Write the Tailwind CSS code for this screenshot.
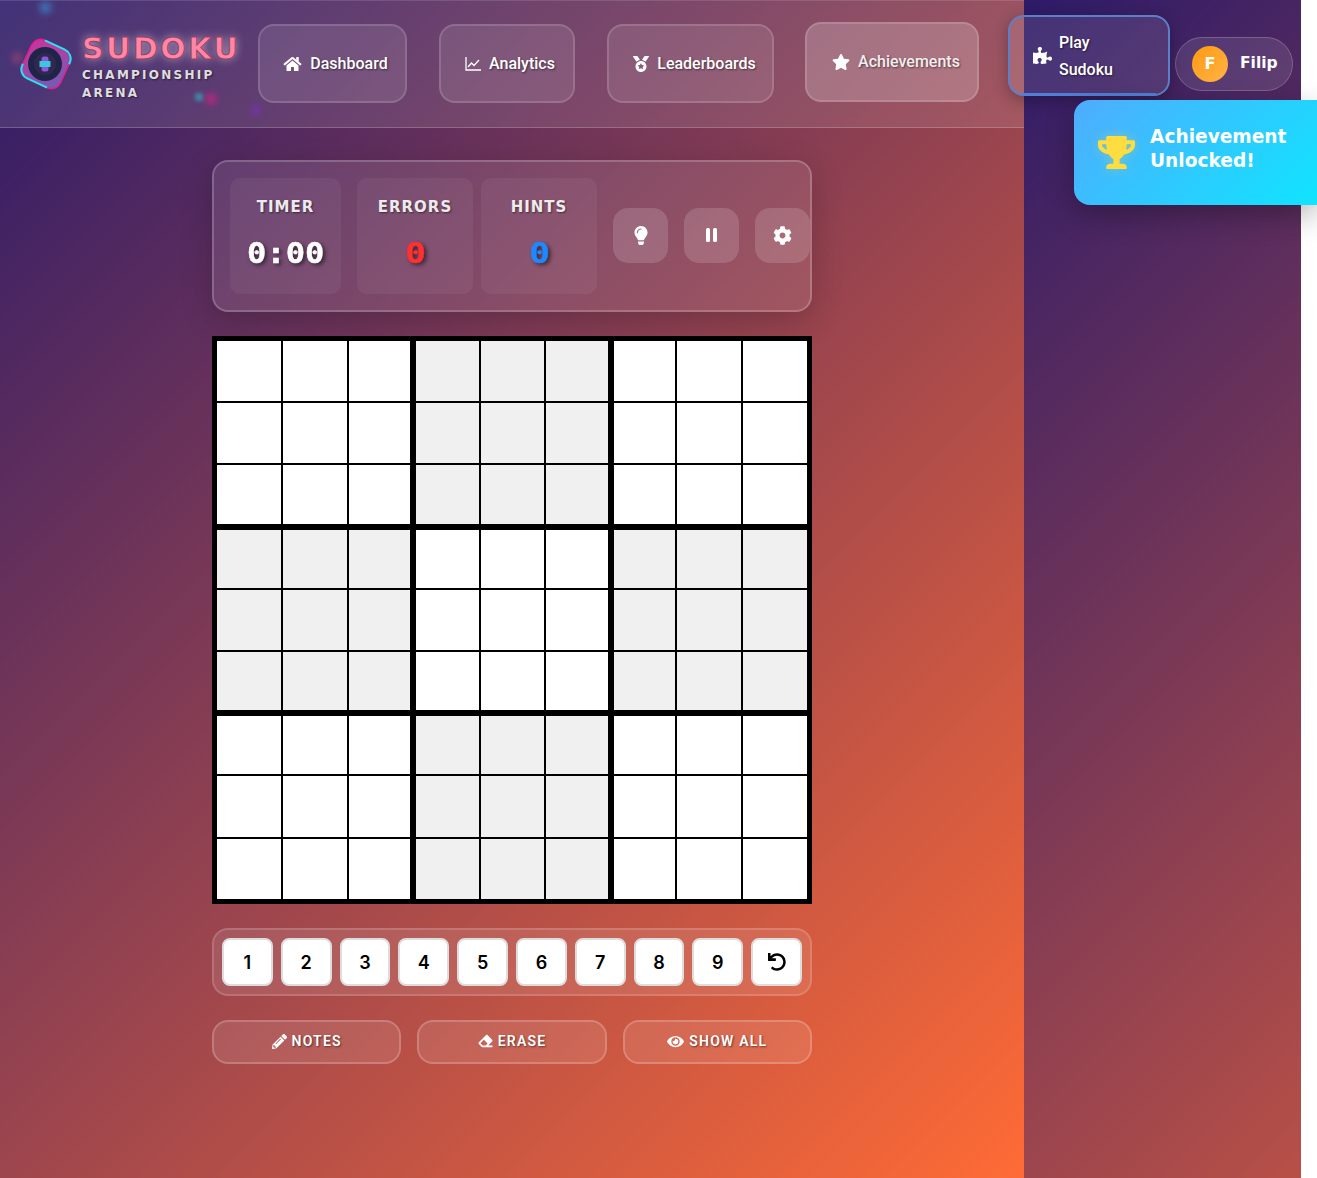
<!DOCTYPE html>
<html lang="en">
<head>
  <meta charset="UTF-8">
  <meta name="viewport" content="width=device-width, initial-scale=1.0">
  <title>Sudoku Championship Arena</title>
  <script src="https://cdn.jsdelivr.net/npm/@tailwindcss/browser@4"></script>
</head>
<body class="bg-white overflow-hidden [font-family:Roboto,sans-serif]">
  <div class="relative w-[1317px] h-[1178px] overflow-hidden">
    <div class="w-[1301px] h-[1178px] bg-[linear-gradient(135deg,#2d1b69_0%,#ff6b35_100%)] bg-[length:1024px_1178px]">

      <!-- header -->
      <header class="relative flex items-center w-[1024px] h-[128px] pl-[20px] bg-white/10 border-b border-white/20 shadow-[inset_0_1px_0_rgba(255,255,255,0.12)]">
        <span class="absolute left-[39px] top-[1px] w-[13px] h-[13px] rounded-full bg-[#3a8fd0]/60 blur-[3px]"></span>
        <span class="absolute left-[12px] top-[52px] w-[10px] h-[12px] rounded-full bg-[#d0506a]/40 blur-[3px]"></span>
        <span class="absolute left-[195px] top-[93px] w-[8px] h-[8px] rounded-full bg-[#30b8c8]/70 blur-[2px]"></span>
        <span class="absolute left-[205px] top-[93px] w-[12px] h-[12px] rounded-full bg-[#e0208a]/60 blur-[3px]"></span>
        <span class="absolute left-[251px] top-[105px] w-[10px] h-[10px] rounded-full bg-[#7a30c0]/70 blur-[3px]"></span>

        <div class="flex items-center w-[238px] shrink-0">
          <svg class="w-[52px] h-[54px] shrink-0" viewBox="0 0 52 54">
            <defs>
              <linearGradient id="logoFill" x1="0" y1="0" x2="1" y2="1">
                <stop offset="0" stop-color="#d0309a"/>
                <stop offset="1" stop-color="#6a60b8"/>
              </linearGradient>
            </defs>
            <g transform="rotate(25 26 27)">
              <rect x="5" y="6" width="42" height="42" rx="10" fill="url(#logoFill)" stroke="#e0208a" stroke-width="1.5"/>
              <rect x="5" y="6" width="42" height="42" rx="10" fill="none" stroke="#22e6f2" stroke-width="2" pathLength="100" stroke-dasharray="26 24"/>
            </g>
            <circle cx="25" cy="27" r="17" fill="#1e2548"/>
            <circle cx="25" cy="27" r="11" fill="#33264f"/>
            <rect x="21.5" y="19.5" width="7" height="15" rx="2.5" fill="#8a58d8"/>
            <rect x="19.5" y="24" width="11" height="6" fill="#38c8e0"/>
          </svg>
          <div class="ml-[10px] pt-[8px]">
            <div class="text-[30px] leading-[30px] font-bold tracking-[2.5px] text-[#ff86a6] [font-family:'DejaVu_Sans',sans-serif] [-webkit-text-stroke:1px_#9c3f5e] [text-shadow:0_0_10px_rgba(255,255,255,0.55)]">SUDOKU</div>
            <div class="w-[150px] mt-[2px] text-[12px] leading-[18px] font-bold tracking-[2.25px] text-[#dedede] [font-family:'DejaVu_Sans',sans-serif] [text-shadow:1px_1px_2px_rgba(0,0,0,0.5)]">CHAMPIONSHIP ARENA</div>
          </div>
        </div>

        <a class="flex items-center justify-center gap-[8px] w-[149px] h-[79px] pl-[6px] shrink-0 rounded-[16px] border-2 border-white/15 bg-white/10 text-white font-medium text-[16px] [text-shadow:1px_1px_2px_rgba(0,0,0,0.5)]">
          <svg class="w-[19px] h-[16px] fill-white" viewBox="0 0 576 512"><path d="M280.37 148.26L96 300.11V464a16 16 0 0 0 16 16l112.06-.29a16 16 0 0 0 15.92-16V368a16 16 0 0 1 16-16h64a16 16 0 0 1 16 16v95.64a16 16 0 0 0 16 16.05L464 480a16 16 0 0 0 16-16V300L295.67 148.26a12.19 12.19 0 0 0-15.3 0zM571.6 251.47L488 182.56V44.05a12 12 0 0 0-12-12h-56a12 12 0 0 0-12 12v72.61L318.47 43a48 48 0 0 0-61 0L4.34 251.47a12 12 0 0 0-1.6 16.9l25.5 31A12 12 0 0 0 45.15 301l235.22-193.74a12.19 12.19 0 0 1 15.3 0L530.9 301a12 12 0 0 0 16.9-1.6l25.5-31a12 12 0 0 0-1.7-16.93z"/></svg>
          Dashboard
        </a>
        <a class="flex items-center justify-center gap-[8px] w-[136px] h-[79px] ml-[32px] pl-[6px] shrink-0 rounded-[16px] border-2 border-white/15 bg-white/10 text-white font-medium text-[16px] [text-shadow:1px_1px_2px_rgba(0,0,0,0.5)]">
          <svg class="w-[16px] h-[14px]" viewBox="0 0 16 14" fill="none" stroke="white" stroke-width="1.3"><path d="M1 0v13h15"/><path d="M3 10l3.5-4 2.5 2.5L14 3"/></svg>
          Analytics
        </a>
        <a class="flex items-center justify-center gap-[8px] w-[167px] h-[79px] ml-[32px] pl-[8px] shrink-0 rounded-[16px] border-2 border-white/15 bg-white/10 text-white font-medium text-[16px] [text-shadow:1px_1px_2px_rgba(0,0,0,0.5)]">
          <svg class="w-[16px] h-[16px] fill-white" viewBox="0 0 512 512"><path d="M223.75 130.75L154.62 15.54A31.997 31.997 0 0 0 127.18 0H16.03C3.08 0-4.5 14.57 2.92 25.18l111.27 158.96c29.72-27.77 67.52-46.83 109.56-53.39zM495.97 0H384.82c-11.24 0-21.66 5.9-27.44 15.54l-69.13 115.21c42.04 6.56 79.84 25.62 109.56 53.38L509.08 25.18C516.5 14.57 508.92 0 495.97 0zM256 160c-97.2 0-176 78.8-176 176s78.8 176 176 176 176-78.8 176-176-78.8-176-176-176zm92.52 157.26l-37.93 36.96 8.97 52.22c1.6 9.36-8.26 16.51-16.65 12.09L256 393.88l-46.9 24.65c-8.4 4.45-18.25-2.74-16.65-12.09l8.97-52.22-37.93-36.96c-6.82-6.64-3.05-18.23 6.35-19.59l52.43-7.64 23.43-47.52c1.63-3.33 4.84-5.03 8.05-5.03 3.18 0 6.39 1.67 8.05 5.03l23.43 47.52 52.43 7.64c9.4 1.36 13.17 12.95 6.35 19.59z"/></svg>
          Leaderboards
        </a>
        <a class="flex items-center justify-center gap-[8px] w-[174px] h-[80px] ml-[31px] pl-[8px] shrink-0 rounded-[16px] border-2 border-white/15 bg-white/20 text-white/90 font-medium text-[16px] -translate-y-[2px] [text-shadow:1px_1px_2px_rgba(0,0,0,0.5)]">
          <svg class="w-[18px] h-[16px] fill-white" viewBox="0 0 576 512"><path d="M259.3 17.8L194 150.2 47.9 171.5c-26.2 3.8-36.7 36.1-17.7 54.6l105.7 103-25 145.5c-4.5 26.3 23.2 46 46.4 33.7L288 439.6l130.7 68.7c23.2 12.2 50.9-7.4 46.4-33.7l-25-145.5 105.7-103c19-18.5 8.5-50.8-17.7-54.6L382 150.2 316.7 17.8c-11.7-23.6-45.6-23.9-57.4 0z"/></svg>
          Achievements
        </a>
        <a class="relative flex items-center w-[162px] h-[81px] ml-[29px] pl-[23px] gap-[7px] shrink-0 rounded-[16px] border-2 border-[#5c80c8] bg-white/10 text-white font-medium text-[16px] leading-[27px] -translate-y-[8px] shadow-[0_4px_16px_rgba(0,0,0,0.3)] [text-shadow:1px_1px_2px_rgba(0,0,0,0.5)]">
          <svg class="w-[19px] h-[17px] fill-white shrink-0" viewBox="0 0 576 512"><path d="M519.442 288.651c-41.519 0-59.5 31.593-82.058 31.593C377.409 320.244 432 144 432 144s-196.288 80-196.288-3.297c0-35.827 36.288-46.25 36.288-85.985C272 19.216 243.885 0 210.539 0c-34.654 0-66.366 18.891-66.366 56.346 0 41.364 31.711 59.277 31.711 81.75C175.885 207.719 0 166.758 0 166.758v333.237s178.635 41.047 178.635-28.662c0-22.473-40-40.107-40-81.471 0-37.456 29.25-56.346 63.577-56.346 33.673 0 61.788 19.216 61.788 54.717 0 39.735-36.288 50.158-36.288 85.985 0 60.803 129.675 25.73 181.23 25.73 0 0-34.725-120.101 25.827-120.101 35.962 0 46.222 36.152 85.946 36.152C556.712 416 576 387.885 576 354.539c0-34.654-18.891-65.888-56.558-65.888z"/></svg>
          <span class="w-[70px]">Play Sudoku</span>
          <span class="absolute left-[12px] right-[12px] -bottom-[2px] h-[3px] bg-[#4f7fd8]"></span>
        </a>
        <div class="flex items-center w-[118px] h-[54px] ml-[5px] pl-[16px] gap-[12px] shrink-0 rounded-full border border-white/20 bg-white/10">
          <span class="flex items-center justify-center w-[36px] h-[36px] rounded-full bg-[linear-gradient(135deg,#ff9a10,#ffb347)] text-white font-bold text-[16px] [font-family:'DejaVu_Sans',sans-serif]">F</span>
          <span class="text-white font-bold text-[15.5px] [font-family:'DejaVu_Sans',sans-serif]">Filip</span>
        </div>
      </header>

      <!-- game column -->
      <div class="w-[1024px]">
        <main class="w-[600px] mx-auto pt-[32px]">
          <section class="flex items-center h-[152px] pl-[16px] rounded-[16px] border-2 border-white/20 bg-white/10 shadow-[0_8px_32px_rgba(0,0,0,0.2)]">
            <div class="flex flex-col items-center w-[111px] h-[116px] pt-[18px] shrink-0 rounded-[10px] bg-white/5">
              <span class="text-[15px] leading-[22px] tracking-[1px] font-semibold text-white/90 [font-family:'DejaVu_Sans',sans-serif] [text-shadow:1px_1px_2px_rgba(0,0,0,0.5)]">TIMER</span>
              <span class="mt-[18px] text-[28px] leading-[36px] font-bold text-white scale-x-[1.15] [font-family:'DejaVu_Sans_Mono',monospace] [-webkit-text-stroke:0.4px_currentColor] [text-shadow:2px_2px_4px_rgba(0,0,0,0.6)]">0:00</span>
            </div>
            <div class="flex flex-col items-center w-[116px] h-[116px] ml-[16px] pt-[18px] shrink-0 rounded-[10px] bg-white/5">
              <span class="text-[15px] leading-[22px] tracking-[1px] font-semibold text-white/90 [font-family:'DejaVu_Sans',sans-serif] [text-shadow:1px_1px_2px_rgba(0,0,0,0.5)]">ERRORS</span>
              <span class="mt-[18px] text-[28px] leading-[36px] font-bold text-[#ff3030] scale-x-[1.25] [font-family:'DejaVu_Sans_Mono',monospace] [-webkit-text-stroke:0.4px_currentColor] [text-shadow:2px_2px_4px_rgba(0,0,0,0.6)]">0</span>
            </div>
            <div class="flex flex-col items-center w-[116px] h-[116px] ml-[8px] pt-[18px] shrink-0 rounded-[10px] bg-white/5">
              <span class="text-[15px] leading-[22px] tracking-[1px] font-semibold text-white/90 [font-family:'DejaVu_Sans',sans-serif] [text-shadow:1px_1px_2px_rgba(0,0,0,0.5)]">HINTS</span>
              <span class="mt-[18px] text-[28px] leading-[36px] font-bold text-[#1e88ff] scale-x-[1.25] [font-family:'DejaVu_Sans_Mono',monospace] [-webkit-text-stroke:0.4px_currentColor] [text-shadow:2px_2px_4px_rgba(0,0,0,0.6)]">0</span>
            </div>
            <button class="flex items-center justify-center w-[55px] h-[55px] ml-[16px] -mt-[2px] shrink-0 rounded-[15px] bg-white/15">
              <svg class="w-[14px] h-[19px] fill-white" viewBox="0 0 352 512"><path d="M96.06 454.35c.01 6.29 1.87 12.45 5.36 17.69l17.09 25.69a31.99 31.99 0 0 0 26.64 14.28h61.71a31.99 31.99 0 0 0 26.64-14.28l17.09-25.69a31.989 31.989 0 0 0 5.36-17.69l.04-38.35H96.01l.05 38.35zM0 176c0 44.37 16.45 84.85 43.56 115.78 16.52 18.85 42.36 58.23 52.21 91.45.04.26.07.52.11.78h160.24c.04-.26.07-.51.11-.78 9.85-33.22 35.69-72.6 52.21-91.45C335.55 260.85 352 220.37 352 176 352 78.61 272.91-.3 175.45 0 73.44.31 0 82.97 0 176zm176-80c-44.11 0-80 35.89-80 80 0 8.84-7.16 16-16 16s-16-7.16-16-16c0-61.76 50.24-112 112-112 8.84 0 16 7.16 16 16s-7.16 16-16 16z"/></svg>
            </button>
            <button class="flex items-center justify-center gap-[3px] w-[55px] h-[55px] ml-[16px] -mt-[2px] shrink-0 rounded-[15px] bg-white/15">
              <span class="w-[4px] h-[14px] rounded-[1.5px] bg-white"></span>
              <span class="w-[4px] h-[14px] rounded-[1.5px] bg-white"></span>
            </button>
            <button class="flex items-center justify-center w-[55px] h-[55px] ml-[16px] -mt-[2px] shrink-0 rounded-[15px] bg-white/15">
              <svg class="w-[19px] h-[19px] fill-white" viewBox="0 0 512 512"><path d="M487.4 315.7l-42.6-24.6c4.3-23.2 4.3-47 0-70.2l42.6-24.6c4.9-2.8 7.1-8.6 5.5-14-11.1-35.6-30-67.8-54.7-94.6-3.8-4.1-10-5.1-14.8-2.3L380.8 110c-17.9-15.4-38.5-27.3-60.8-35.1V25.8c0-5.6-3.9-10.5-9.4-11.7-36.7-8.2-74.3-7.8-109.2 0-5.5 1.2-9.4 6.1-9.4 11.7V75c-22.2 7.9-42.8 19.8-60.8 35.1L88.7 85.5c-4.9-2.8-11-1.9-14.8 2.3-24.7 26.7-43.6 58.9-54.7 94.6-1.7 5.4.6 11.2 5.5 14L67.3 221c-4.3 23.2-4.3 47 0 70.2l-42.6 24.6c-4.9 2.8-7.1 8.6-5.5 14 11.1 35.6 30 67.8 54.7 94.6 3.8 4.1 10 5.1 14.8 2.3l42.6-24.6c17.9 15.4 38.5 27.3 60.8 35.1v49.2c0 5.6 3.9 10.5 9.4 11.7 36.7 8.2 74.3 7.8 109.2 0 5.5-1.2 9.4-6.1 9.4-11.7v-49.2c22.2-7.9 42.8-19.8 60.8-35.1l42.6 24.6c4.9 2.8 11 1.9 14.8-2.3 24.7-26.7 43.6-58.9 54.7-94.6 1.5-5.5-.7-11.3-5.6-14.1zM256 336c-44.1 0-80-35.9-80-80s35.9-80 80-80 80 35.9 80 80-35.9 80-80 80z"/></svg>
            </button>
          </section>

          <!-- board: filled in by the script below -->
          <section id="board" class="grid grid-cols-[193px_192px_193px] grid-rows-[183px_180px_183px] gap-[6px] w-[600px] h-[568px] mt-[24px] p-[5px] bg-black"></section>

          <section class="flex gap-[8px] h-[68px] mt-[24px] p-[8px] rounded-[16px] border-2 border-white/15 bg-white/10">
            <button class="flex-1 flex items-center justify-center rounded-[8px] border-2 border-[#ddd] bg-white text-black text-[18px] font-semibold [font-family:Inter,sans-serif]">1</button>
            <button class="flex-1 flex items-center justify-center rounded-[8px] border-2 border-[#ddd] bg-white text-black text-[18px] font-semibold [font-family:Inter,sans-serif]">2</button>
            <button class="flex-1 flex items-center justify-center rounded-[8px] border-2 border-[#ddd] bg-white text-black text-[18px] font-semibold [font-family:Inter,sans-serif]">3</button>
            <button class="flex-1 flex items-center justify-center rounded-[8px] border-2 border-[#ddd] bg-white text-black text-[18px] font-semibold [font-family:Inter,sans-serif]">4</button>
            <button class="flex-1 flex items-center justify-center rounded-[8px] border-2 border-[#ddd] bg-white text-black text-[18px] font-semibold [font-family:Inter,sans-serif]">5</button>
            <button class="flex-1 flex items-center justify-center rounded-[8px] border-2 border-[#ddd] bg-white text-black text-[18px] font-semibold [font-family:Inter,sans-serif]">6</button>
            <button class="flex-1 flex items-center justify-center rounded-[8px] border-2 border-[#ddd] bg-white text-black text-[18px] font-semibold [font-family:Inter,sans-serif]">7</button>
            <button class="flex-1 flex items-center justify-center rounded-[8px] border-2 border-[#ddd] bg-white text-black text-[18px] font-semibold [font-family:Inter,sans-serif]">8</button>
            <button class="flex-1 flex items-center justify-center rounded-[8px] border-2 border-[#ddd] bg-white text-black text-[18px] font-semibold [font-family:Inter,sans-serif]">9</button>
            <button class="flex-1 flex items-center justify-center rounded-[8px] border-2 border-[#ddd] bg-white">
              <svg class="w-[18px] h-[18px] fill-black" viewBox="0 0 512 512"><path d="M212.333 224.333H12c-6.627 0-12-5.373-12-12V12C0 5.373 5.373 0 12 0h48c6.627 0 12 5.373 12 12v78.112C117.773 39.279 184.26 7.47 258.175 8.007c136.906.994 246.448 111.623 246.157 248.532C504.041 393.258 393.12 504 256.333 504c-64.089 0-122.496-24.313-166.51-64.215-5.099-4.622-5.334-12.554-.467-17.42l33.967-33.967c4.474-4.474 11.662-4.717 16.401-.525C170.76 415.336 211.58 432 256.333 432c97.268 0 176-78.716 176-176 0-97.267-78.716-176-176-176-58.496 0-110.28 28.476-142.274 72.333h98.274c6.627 0 12 5.373 12 12v48c0 6.627-5.373 12-12 12z"/></svg>
            </button>
          </section>

          <section class="flex gap-[16px] h-[44px] mt-[24px]">
            <button class="flex-1 flex items-center justify-center gap-[5px] pb-[2px] rounded-[16px] border-2 border-white/20 bg-white/10 text-white text-[14px] font-semibold tracking-[1.2px] [text-shadow:1px_1px_2px_rgba(0,0,0,0.5)]">
              <svg class="w-[15px] h-[15px] fill-white" viewBox="0 0 512 512"><path d="M497.9 142.1l-46.1 46.1c-4.7 4.7-12.3 4.7-17 0l-111-111c-4.7-4.7-4.7-12.3 0-17l46.1-46.1c18.7-18.7 49.1-18.7 67.9 0l60.1 60.1c18.8 18.7 18.8 49.1 0 67.9zM284.2 99.8L21.6 362.4.4 483.9c-2.9 16.4 11.4 30.6 27.8 27.8l121.5-21.3 262.6-262.6c4.7-4.7 4.7-12.3 0-17l-111-111c-4.8-4.7-12.4-4.7-17.1 0zM124.1 339.9c-5.5-5.5-5.5-14.3 0-19.8l154-154c5.5-5.5 14.3-5.5 19.8 0s5.5 14.3 0 19.8l-154 154c-5.5 5.5-14.3 5.5-19.8 0zM88 424h48v36.3l-64.5 11.3-31.1-31.1L51.7 376H88v48z"/></svg>
              NOTES
            </button>
            <button class="flex-1 flex items-center justify-center gap-[5px] pb-[2px] rounded-[16px] border-2 border-white/20 bg-white/10 text-white text-[14px] font-semibold tracking-[1.2px] [text-shadow:1px_1px_2px_rgba(0,0,0,0.5)]">
              <svg class="w-[15px] h-[14px] fill-white" viewBox="0 0 512 512"><path d="M497.941 273.941c18.745-18.745 18.745-49.137 0-67.882l-160-160c-18.745-18.745-49.136-18.746-67.883 0l-256 256c-18.745 18.745-18.745 49.137 0 67.882l96 96A48.004 48.004 0 0 0 144 480h356c6.627 0 12-5.373 12-12v-40c0-6.627-5.373-12-12-12H355.883l142.058-142.059zm-302.627-62.627l137.373 137.373L265.373 416H150.628l-80-80 124.686-124.686z"/></svg>
              ERASE
            </button>
            <button class="flex-1 flex items-center justify-center gap-[5px] pb-[2px] rounded-[16px] border-2 border-white/20 bg-white/10 text-white text-[14px] font-semibold tracking-[1.2px] [text-shadow:1px_1px_2px_rgba(0,0,0,0.5)]">
              <svg class="w-[17px] h-[15px] fill-white" viewBox="0 0 576 512"><path d="M572.52 241.4C518.29 135.59 410.93 64 288 64S57.68 135.64 3.48 241.41a32.35 32.35 0 0 0 0 29.19C57.71 376.41 165.07 448 288 448s230.32-71.64 284.52-177.41a32.35 32.35 0 0 0 0-29.19zM288 400a144 144 0 1 1 144-144 143.93 143.93 0 0 1-144 144zm0-240a95.31 95.31 0 0 0-25.31 3.79 47.85 47.85 0 0 1-66.9 66.9A95.78 95.78 0 1 0 288 160z"/></svg>
              SHOW ALL
            </button>
          </section>
        </main>
      </div>
    </div>

    <!-- toast -->
    <div class="absolute left-[1074px] top-[100px] flex items-center w-[243px] h-[105px] pl-[24px] rounded-l-[16px] bg-[linear-gradient(135deg,#4facfe,#10e4ff)] shadow-[0_10px_30px_rgba(0,0,0,0.3)]">
      <svg class="w-[37px] h-[33px] fill-[#ffdd40] shrink-0 [filter:drop-shadow(0_0_6px_rgba(255,221,64,0.35))]" viewBox="0 0 576 512"><path d="M552 64H448V24c0-13.3-10.7-24-24-24H152c-13.3 0-24 10.7-24 24v40H24C10.7 64 0 74.7 0 88v56c0 35.7 22.5 72.4 61.9 100.7 31.5 22.7 69.8 37.1 110 41.7C203.3 338.5 240 360 240 360v72h-48c-35.3 0-64 20.7-64 56v12c0 6.6 5.4 12 12 12h296c6.6 0 12-5.4 12-12v-12c0-35.3-28.7-56-64-56h-48v-72s36.7-21.5 68.1-73.6c40.3-4.6 78.7-19 110-41.7 39.3-28.3 61.9-65 61.9-100.7V88c0-13.3-10.7-24-24-24zM99.3 192.8C74.9 175.2 64 155.6 64 144v-16h64.2c1 32.6 5.8 61.2 12.8 86.2-15.1-5.2-29.2-12.4-41.7-21.4zM512 144c0 16.1-17.7 36.1-35.3 48.8-12.5 9-26.7 16.2-41.8 21.4 7-25 11.8-53.6 12.8-86.2H512v16z"/></svg>
      <div class="w-[150px] ml-[15px] -mt-[8px] text-white text-[18.6px] leading-[24px] font-semibold [font-family:'DejaVu_Sans',sans-serif]">Achievement Unlocked!</div>
    </div>
  </div>

  <script>
    // board tracks differ by a pixel or so per box, so they are listed per box
    const boxTracks = [
      'grid-cols-[64px_64px_61px] grid-rows-[60px_60px_59px]',
      'grid-cols-[63px_63px_62px] grid-rows-[60px_60px_59px]',
      'grid-cols-[61px_64px_64px] grid-rows-[60px_60px_59px]',
      'grid-cols-[64px_64px_61px] grid-rows-[58px_60px_58px]',
      'grid-cols-[63px_63px_62px] grid-rows-[58px_60px_58px]',
      'grid-cols-[61px_64px_64px] grid-rows-[58px_60px_58px]',
      'grid-cols-[64px_64px_61px] grid-rows-[58px_61px_60px]',
      'grid-cols-[63px_63px_62px] grid-rows-[58px_61px_60px]',
      'grid-cols-[61px_64px_64px] grid-rows-[58px_61px_60px]'
    ];
    const board = document.getElementById('board');
    boxTracks.forEach((tracks, i) => {
      const box = document.createElement('div');
      box.className = 'grid gap-[2px] ' + tracks;
      for (let c = 0; c < 9; c++) {
        const cell = document.createElement('div');
        cell.className = i % 2 ? 'bg-[#f0f0f0]' : 'bg-white';
        box.appendChild(cell);
      }
      board.appendChild(box);
    });
  </script>
</body>
</html>
